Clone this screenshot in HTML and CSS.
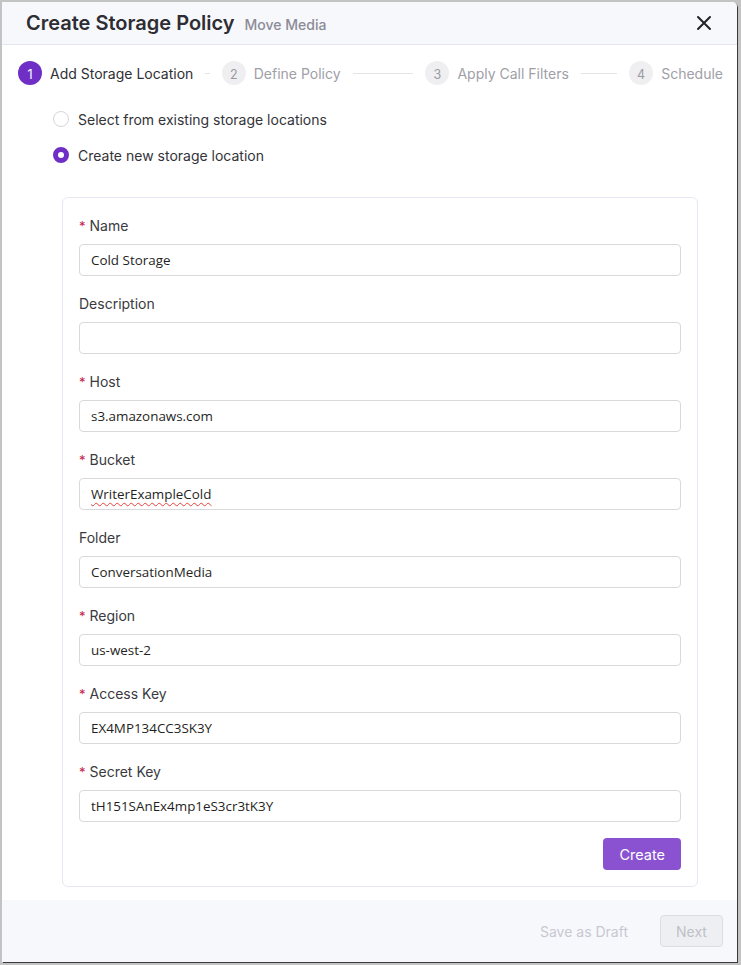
FILE: index.html
```html
<!DOCTYPE html>
<html lang="en">
<head>
    <meta charset="UTF-8">
    <meta name="viewport" content="width=device-width, initial-scale=1.0">
    <title>Create Storage Policy</title>
    <link rel="stylesheet" href="styles.css">
</head>
<body>
    <div class="dialog">
        <div class="head">
            <span class="title">Create Storage Policy</span>
            <span class="sub">Move Media</span>
            <svg class="close" width="16" height="16" viewBox="0 0 16 16">
                <path d="M2 2 L14 14 M14 2 L2 14" stroke="#222" stroke-width="2" stroke-linecap="round"/>
            </svg>
        </div>

        <div class="body">
            <!-- steps -->
            <div class="steps">
                <div class="step active"><span class="num">1</span><span class="stxt">Add Storage Location</span><span class="line"></span></div>
                <div class="step"><span class="num">2</span><span class="stxt">Define Policy</span><span class="line"></span></div>
                <div class="step"><span class="num">3</span><span class="stxt">Apply Call Filters</span><span class="line"></span></div>
                <div class="step last"><span class="num">4</span><span class="stxt">Schedule</span></div>
            </div>

            <div class="radios">
                <div class="radio"><span class="dot"></span>Select from existing storage locations</div>
                <div class="radio on"><span class="dot"></span>Create new storage location</div>
            </div>

            <div class="card">
                <div class="field">
                    <div class="label"><i>*</i>Name</div>
                    <div class="input">Cold Storage</div>
                </div>
                <div class="field">
                    <div class="label">Description</div>
                    <div class="input"></div>
                </div>
                <div class="field">
                    <div class="label"><i>*</i>Host</div>
                    <div class="input">s3.amazonaws.com</div>
                </div>
                <div class="field">
                    <div class="label"><i>*</i>Bucket</div>
                    <div class="input"><span class="typo">WriterExampleCold</span></div>
                </div>
                <div class="field">
                    <div class="label">Folder</div>
                    <div class="input">ConversationMedia</div>
                </div>
                <div class="field">
                    <div class="label"><i>*</i>Region</div>
                    <div class="input">us-west-2</div>
                </div>
                <div class="field">
                    <div class="label"><i>*</i>Access Key</div>
                    <div class="input">EX4MP134CC3SK3Y</div>
                </div>
                <div class="field">
                    <div class="label"><i>*</i>Secret Key</div>
                    <div class="input">tH151SAnEx4mp1eS3cr3tK3Y</div>
                </div>
                <div class="actions">
                    <button class="create">Create</button>
                </div>
            </div>
        </div>

        <div class="foot">
            <button class="draft">Save as Draft</button>
            <button class="next">Next</button>
        </div>
    </div>
</body>
</html>
```

FILE: styles.css
```css
*{
    box-sizing:border-box;
}
body{
    margin:0;
    padding:2px 4px 3px 2px;
    background:#c3c3c3;
    font-family:Inter, "Liberation Sans", sans-serif;
    color:#2f2f35;
}
.dialog{
    width:735px;
    height:960px;
    background:#fff;
    border-top-right-radius:5px;
    box-shadow:1px 1px 0 #3a3a3a;
    display:flex;
    flex-direction:column;
    overflow:hidden;
}
.head{
    height:43px;
    background:#f7f8fc;
    border-bottom:1px solid #e4e7ef;
    display:flex;
    align-items:center;
    padding:0 24px;
}
.title{
    font-size:20px;
    font-weight:600;
    color:#2d2d33;
}
.sub{
    margin-left:10px;
    font-size:14px;
    font-weight:500;
    color:#8b8b96;
    padding-top:2px;
}
.close{
    margin-left:auto;
    margin-right:1px;
}
.body{
    flex:1;
    padding:16px 0 0;
}
.steps{
    display:flex;
    gap:12px;
    padding:0 14px 0 16px;
}
.step{
    flex:1;
    display:flex;
    align-items:center;
    min-width:0;
}
.step.last{
    flex:none;
}
.num{
    width:24px;
    height:24px;
    border-radius:50%;
    background:#efeff1;
    color:#9a9aa2;
    font-size:12.5px;
    display:flex;
    align-items:center;
    justify-content:center;
    flex:none;
    padding-top:2px;
}
.stxt{
    margin-left:8px;
    font-size:14px;
    color:#a0a0a8;
    white-space:nowrap;
}
.line{
    flex:1;
    height:1px;
    background:#e4e4e8;
    margin-left:12px;
}
.step.active .num{
    background:#6f2fc6;
    color:#fff;
}
.step.active .stxt{
    color:#2f2f35;
}
.radios{
    padding:23px 0 0 51px;
    display:flex;
    flex-direction:column;
    gap:14px;
}
.radio{
    display:flex;
    align-items:center;
    height:22px;
    font-size:14px;
    color:#333338;
}
.dot{
    width:16px;
    height:16px;
    border-radius:50%;
    border:1px solid #d6d6dc;
    margin-right:9px;
}
.radio.on .dot{
    border:5px solid #6f2fc6;
    background:#fff;
}
.card{
    margin:31px 39px 0 60px;
    border:1px solid #e8e6f2;
    border-radius:6px;
    padding:16px;
}
.field{
    margin-bottom:16px;
}
.label{
    height:22px;
    padding-top:1px;
    font-size:14px;
    line-height:21px;
    color:#3a3a40;
    margin-bottom:8px;
}
.label i{
    font-style:normal;
    color:#c4204e;
    margin-right:4px;
    font-size:13px;
}
.input{
    height:32px;
    border:1px solid #d9d9d9;
    border-radius:4px;
    padding:0 11px;
    display:flex;
    align-items:center;
    font-family:"Open Sans", "Noto Sans", sans-serif;
    font-size:13.4px;
    color:#1f1f24;
}
.typo{
    text-decoration:underline wavy #e8403a;
    text-decoration-thickness:1px;
    text-underline-offset:3px;
}
.actions{
    display:flex;
    justify-content:flex-end;
}
.create{
    height:32px;
    padding:0 16px;
    border:none;
    border-radius:4px;
    background:#8a52d0;
    color:#fff;
    font-family:inherit;
    font-size:14.5px;
}
.foot{
    height:62px;
    background:#f7f8fc;
    display:flex;
    align-items:center;
    justify-content:flex-end;
    padding:0 14px 0 0;
    gap:32px;
}
.draft{
    border:none;
    background:none;
    font-family:inherit;
    font-size:14px;
    color:#c8c8d2;
    padding:0;
}
.next{
    width:63px;
    height:32px;
    border:1px solid #dcdde3;
    border-radius:4px;
    background:#eeeff2;
    color:#c0c0c8;
    font-family:inherit;
    font-size:14px;
}
```
